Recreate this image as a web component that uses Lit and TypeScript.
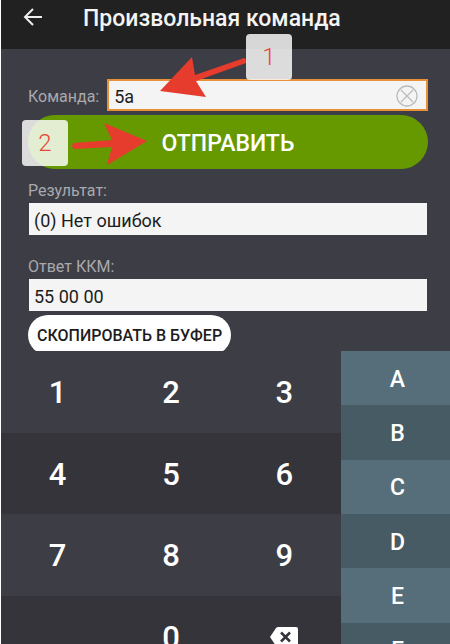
import { LitElement, html, css } from "lit";
import { customElement, state } from "lit/decorators.js";

const DIGITS = ["1", "2", "3", "4", "5", "6", "7", "8", "9", ".", "0"];
const LETTERS = ["A", "B", "C", "D", "E", "F"];

@customElement("app-root")
export class AppRoot extends LitElement {
  @state() private command = "5a";

  static styles = css`
    :host {
      display: flex;
      flex-direction: column;
      box-sizing: border-box;
      position: relative;
      height: 100vh;
      overflow: hidden;
      border-left: 1px solid #fff;
      background: #3d3d46;
      color: #fff;
      font-family: Roboto, "Liberation Sans", sans-serif;
    }
    * {
      box-sizing: border-box;
    }
    button,
    input {
      font: inherit;
      margin: 0;
      border: 0;
      outline: 0;
    }
    button {
      padding: 0;
      color: #fff;
    }
    header {
      display: flex;
      flex: none;
      align-items: flex-start;
      gap: 38px;
      height: 49px;
      padding: 4px 20px;
      background: #212121;
    }
    .back {
      display: flex;
      align-items: center;
      height: 28px;
      background: none;
    }
    h1 {
      margin: 0;
      font-size: 23px;
      line-height: 30px;
      font-weight: 500;
      color: #f4f4f4;
      white-space: nowrap;
    }
    form {
      display: flex;
      flex: none;
      flex-direction: column;
      align-items: stretch;
      padding: 30px 22px 0 27px;
    }
    .row {
      display: flex;
      align-items: center;
      gap: 8px;
      margin-bottom: 4px;
    }
    label {
      font-size: 16px;
      line-height: 24px;
      color: #a9a9ad;
      white-space: nowrap;
    }
    .row label {
      padding-top: 4px;
    }
    .box {
      display: flex;
      flex: 1;
      align-items: center;
      height: 32px;
      padding-right: 8px;
      border: 2px solid #e69138;
      background: #f4f4f4;
    }
    .clear {
      display: flex;
      padding-top: 2px;
      background: none;
    }
    input {
      min-width: 0;
      width: 100%;
      height: 32px;
      padding: 2px 5px 0;
      background: #f4f4f4;
      color: #1c1c1c;
      font-size: 18px;
    }
    .box input {
      height: 28px;
    }
    .send {
      height: 54px;
      padding-top: 2px;
      margin-bottom: 10px;
      border-radius: 27px;
      background: #669900;
      font-size: 23px;
      font-weight: 500;
    }
    .field {
      display: flex;
      flex-direction: column;
      padding: 0 1px;
      margin-bottom: 20px;
    }
    .field label {
      margin-left: -1px;
    }
    .field.last {
      margin-bottom: 4px;
    }
    .copy {
      align-self: flex-start;
      height: 40px;
      padding: 0 9px;
      border-radius: 20px;
      background: #fff;
      color: #1c1c1c;
      font-size: 16px;
      font-weight: 500;
    }
    .pad {
      display: grid;
      flex: none;
      grid-template-columns: 340fr 109fr;
      height: 326px;
      margin-top: -4px;
      position: relative;
      background: #3d3d46;
    }
    .digits {
      display: grid;
      grid-template-columns: repeat(3, 1fr);
      grid-template-rows: repeat(4, 1fr);
    }
    .letters {
      display: grid;
      grid-template-rows: repeat(6, 1fr);
    }
    .digit {
      display: flex;
      align-items: center;
      justify-content: center;
      padding-top: 2px;
      background: #3d3d46;
      font-size: 31px;
      font-weight: 500;
    }
    .digit.dark {
      background: #35343a;
    }
    .letter {
      padding: 2px 0 0 4px;
      background: #566e79;
      font-size: 23px;
      font-weight: 500;
    }
    .letter:nth-child(even) {
      background: #475b64;
    }
    .mark {
      position: absolute;
      display: flex;
      align-items: center;
      justify-content: center;
      width: 46px;
      height: 46px;
      border-radius: 4px;
      background: rgba(255, 255, 255, 0.82);
      color: #ea4335;
      font-size: 24px;
      font-weight: 300;
    }
    .one {
      left: 245px;
      top: 34px;
    }
    .two {
      left: 21px;
      top: 120px;
    }
    .arrows {
      position: absolute;
      left: 0;
      top: 0;
      pointer-events: none;
    }
  `;

  private type(key: string) {
    this.command += key;
  }

  render() {
    return html`
      <header>
        <button class="back" aria-label="Назад">
          <svg width="24" height="20" viewBox="0 0 24 20" fill="none" stroke="#eee" stroke-width="2">
            <path d="M21 9H4M12 1L4 9L12 17" />
          </svg>
        </button>
        <h1>Произвольная команда</h1>
      </header>

      <form @submit=${(e: Event) => e.preventDefault()}>
        <div class="row">
          <label for="command">Команда:</label>
          <div class="box">
            <input
              id="command"
              .value=${this.command}
              @input=${(e: Event) => (this.command = (e.target as HTMLInputElement).value)}
            />
            <button class="clear" type="button" aria-label="Очистить" @click=${() => (this.command = "")}>
              <svg width="22" height="22" viewBox="0 0 22 22" fill="none" stroke="#b9bbbd" stroke-width="1.3">
                <circle cx="11" cy="11" r="10" />
                <path d="M5 5L17 17M17 5L5 17" />
              </svg>
            </button>
          </div>
        </div>
        <button class="send">ОТПРАВИТЬ</button>
        <div class="field">
          <label for="result">Результат:</label>
          <input id="result" readonly value="(0) Нет ошибок" />
        </div>
        <div class="field last">
          <label for="answer">Ответ ККМ:</label>
          <input id="answer" readonly value="55 00 00" />
        </div>
        <button class="copy" type="button">СКОПИРОВАТЬ В БУФЕР</button>
      </form>

      <div class="pad">
        <div class="digits">
          ${DIGITS.map(
            (d, i) => html`<button
              class="digit ${Math.floor(i / 3) % 2 ? "dark" : ""}"
              @click=${() => this.type(d)}
            >${d}</button>`
          )}
          <button class="digit dark" aria-label="Стереть" @click=${() => (this.command = this.command.slice(0, -1))}>
            <svg width="28" height="20" viewBox="0 0 28 20">
              <path d="M8 0H26Q28 0 28 2V18Q28 20 26 20H8Q7 20 6 19L0 10L6 1Q7 0 8 0Z" fill="#fff" />
              <path d="M11 5.500L20 14.500M20 5.500L11 14.500" stroke="#35343a" stroke-width="2.500" />
            </svg>
          </button>
        </div>
        <div class="letters">
          ${LETTERS.map((l) => html`<button class="letter" @click=${() => this.type(l)}>${l}</button>`)}
        </div>
      </div>

      <svg class="arrows" width="260" height="170" viewBox="1 0 260 170" fill="#e63c2e" aria-hidden="true">
        <path d="M160 91L192 57L195 75L244 58Q247 59 246 63L196 81L206 97Z" />
        <path d="M147 141L104 123L112 140L74 143Q70 146 74 149L112 147L107 165Z" />
      </svg>
      <span class="mark one">1</span>
      <span class="mark two">2</span>
    `;
  }
}
